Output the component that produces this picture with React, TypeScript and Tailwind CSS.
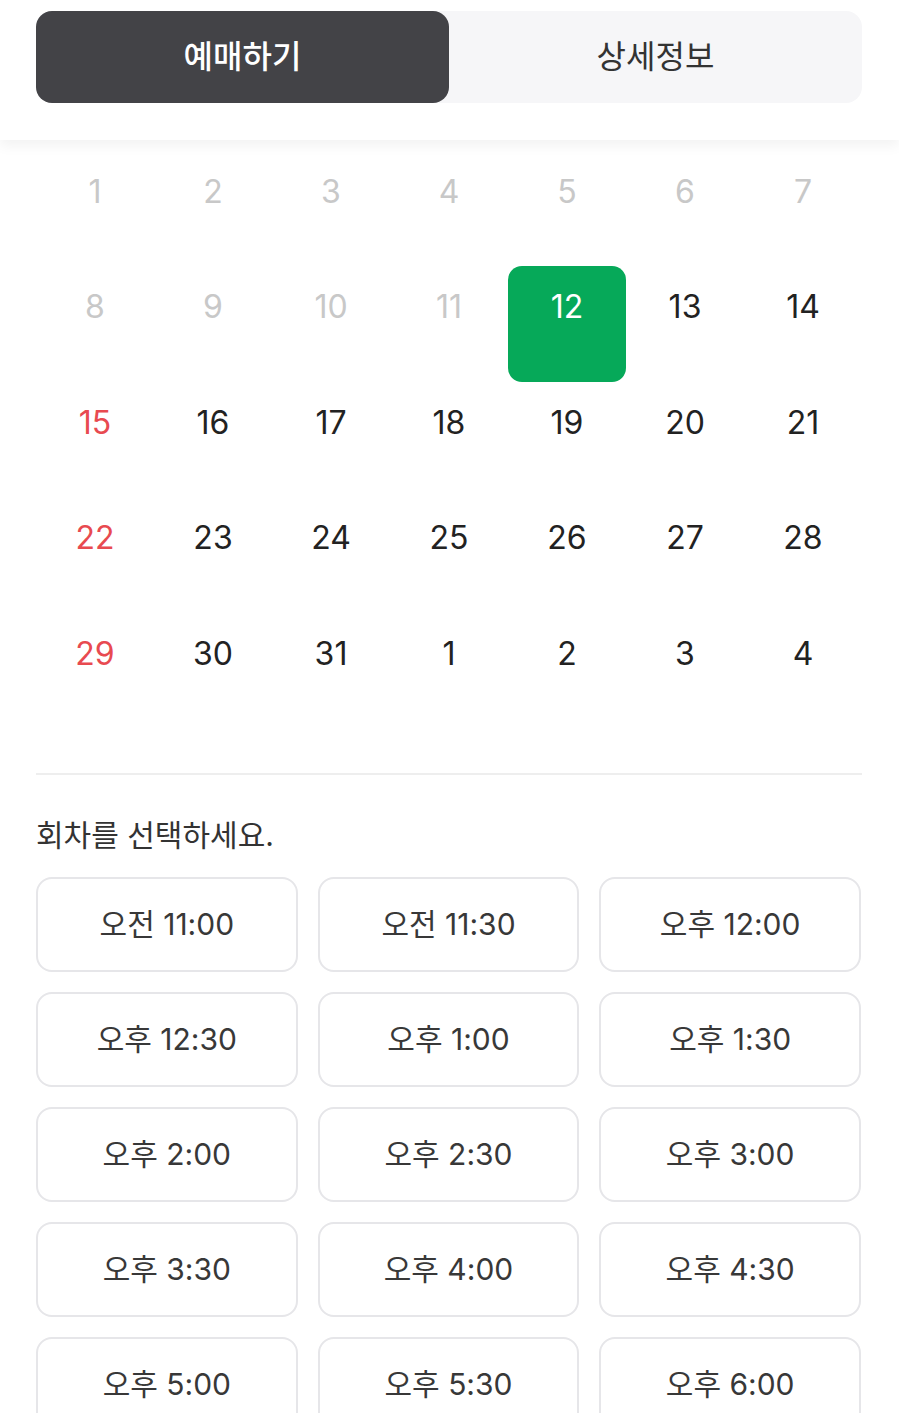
const font = { fontFamily: 'Inter, "Noto Sans CJK KR", sans-serif' };

const weeks = [
  [1, 2, 3, 4, 5, 6, 7],
  [8, 9, 10, 11, 12, 13, 14],
  [15, 16, 17, 18, 19, 20, 21],
  [22, 23, 24, 25, 26, 27, 28],
  [29, 30, 31, 1, 2, 3, 4],
];

const times = [
  "오전 11:00",
  "오전 11:30",
  "오후 12:00",
  "오후 12:30",
  "오후 1:00",
  "오후 1:30",
  "오후 2:00",
  "오후 2:30",
  "오후 3:00",
  "오후 3:30",
  "오후 4:00",
  "오후 4:30",
  "오후 5:00",
  "오후 5:30",
  "오후 6:00",
];

const App = () => {
  return (
    <div className="w-[899px] h-[1413px] overflow-hidden bg-white" style={font}>
      <header className="relative z-10 bg-white pl-[36px] pr-[37px] pt-[11px] pb-[37px] shadow-[0_6px_12px_rgba(0,0,0,0.05)]">
        <div className="flex h-[92px] rounded-[16px] bg-[#f6f6f8]">
          <button className="flex-1 rounded-[16px] bg-[#434347] text-[32px] font-medium text-white">예매하기</button>
          <button className="flex-1 text-[32px] text-[#333]">상세정보</button>
        </div>
      </header>

      <section className="pl-[36px] pr-[37px] pt-[11px]">
        {weeks.map((week, wi) => (
          <div key={wi} className="grid grid-cols-7">
            {week.map((d, di) => {
              const past = wi < 2 && d < 12;
              const selected = wi === 1 && d === 12;
              const nextMonth = wi === 4 && di >= 3;
              let color = "text-[#222]";
              if (past) color = "text-[#c8c8c8]";
              else if (di === 0 && !nextMonth) color = "text-[#e84a50]";
              return (
                <div
                  key={di}
                  className={`flex h-[115.4px] justify-center pt-[23px] rounded-[14px] ${
                    selected ? "bg-[#06a959] text-white" : color
                  }`}
                >
                  <span className="text-[32px] leading-[36px]">{d}</span>
                </div>
              );
            })}
          </div>
        ))}
      </section>

      <div className="ml-[36px] mr-[37px] mt-[45px] h-[2px] bg-[#eeeeee]" />

      <section className="pl-[36px] pr-[38px] pt-[40px]">
        <h2 className="text-[30px] leading-[40px] text-[#333]">회차를 선택하세요.</h2>
        <div className="mt-[22px] grid grid-cols-3 gap-x-[20px] gap-y-[20px]">
          {times.map((t) => (
            <button
              key={t}
              className="flex h-[95px] items-center justify-center rounded-[16px] border-2 border-[#e6e6e9] bg-white text-[30px] text-[#383838]"
            >
              {t}
            </button>
          ))}
        </div>
      </section>
    </div>
  );
};

export default App;
